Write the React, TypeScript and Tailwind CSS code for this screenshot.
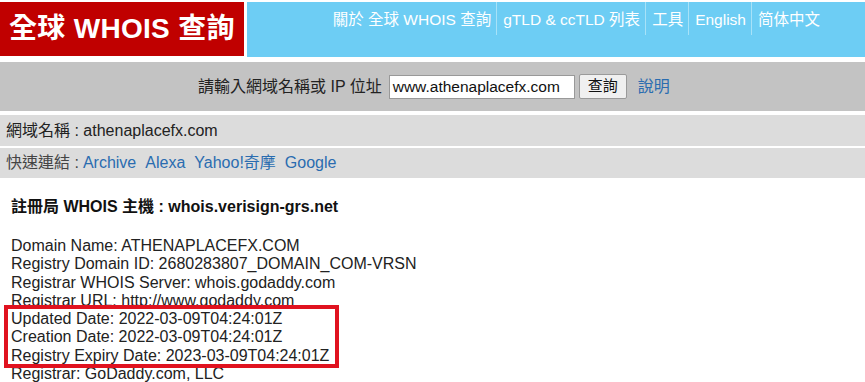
import React from "react";

const font = { fontFamily: '"Liberation Sans", Arial, "Noto Sans CJK TC", sans-serif' };

export default function App() {
  const navItems = ["關於 全球 WHOIS 查詢", "gTLD & ccTLD 列表", "工具", "English", "简体中文"];
  return (
    <div className="w-[865px] h-[382px] overflow-hidden bg-white text-[#222]" style={font}>
      <div className="flex h-[62px] pt-[2px]">
        <div className="w-[244px] h-[54px] bg-[#c00000] flex items-center pl-[9px]">
          <span className="text-white font-bold text-[28px] tracking-[0.3px]">全球 WHOIS 查詢</span>
        </div>
        <div className="w-[3px]" />
        <div className="flex-1 h-[55px] bg-[#6dcdf4] flex justify-end items-start pr-[40px]">
          {navItems.map((t, i) => (
            <div key={t} className={`h-[33px] flex items-center pl-[6px] pr-[5px] pt-[2px] text-white text-[15.5px] ${i > 0 ? "border-l border-[#a7e2f8]" : ""}`}>
              {t}
            </div>
          ))}
        </div>
      </div>
      <div className="h-[49px] bg-[#c3c3c3] flex items-center pl-[198px] text-[16px]">
        <span className="text-[#222]">請輸入網域名稱或 IP 位址</span>
        <div className="ml-[7px] w-[186px] h-[24px] bg-white border border-[#999] flex items-center pl-[3px] text-[15.5px] text-[#111]">www.athenaplacefx.com</div>
        <div className="ml-[4px] w-[48px] h-[25px] bg-[#f0f0f0] border border-[#9a9a9a] rounded-[2px] flex items-center justify-center text-[15px] text-[#111]">查詢</div>
        <span className="ml-[11px] text-[#2a6cb0]">說明</span>
      </div>
      <div className="h-[4px]" />
      <div className="h-[31px] bg-[#dcdcdc] flex items-center pl-[6px] text-[16px] text-[#222]">網域名稱 : athenaplacefx.com</div>
      <div className="h-[2px]" />
      <div className="h-[30px] bg-[#dcdcdc] flex items-center pl-[6px] text-[16px] text-[#444]">
        <span>快速連結 :</span>
        <span className="ml-[4px] text-[#2a6cb0]">Archive</span>
        <span className="ml-[9px] text-[#2a6cb0]">Alexa</span>
        <span className="ml-[9px] text-[#2a6cb0]">Yahoo!奇摩</span>
        <span className="ml-[9px] text-[#2a6cb0]">Google</span>
      </div>
      <div className="pl-[11px] pt-[20px]">
        <div className="font-bold text-[16px] text-[#111] leading-[18px]">註冊局 WHOIS 主機 : whois.verisign-grs.net</div>
        <div className="mt-[21px] text-[16px] leading-[18.3px] text-[#222] relative">
          <div>Domain Name: ATHENAPLACEFX.COM</div>
          <div>Registry Domain ID: 2680283807_DOMAIN_COM-VRSN</div>
          <div>Registrar WHOIS Server: whois.godaddy.com</div>
          <div>Registrar URL: http://www.godaddy.com</div>
          <div className="relative">
            <div className="absolute left-[-7px] top-[-5px] w-[335px] h-[63px] border-[4px] border-[#e0121f]" />
            <div>Updated Date: 2022-03-09T04:24:01Z</div>
            <div>Creation Date: 2022-03-09T04:24:01Z</div>
            <div>Registry Expiry Date: 2023-03-09T04:24:01Z</div>
          </div>
          <div>Registrar: GoDaddy.com, LLC</div>
        </div>
      </div>
    </div>
  );
}
